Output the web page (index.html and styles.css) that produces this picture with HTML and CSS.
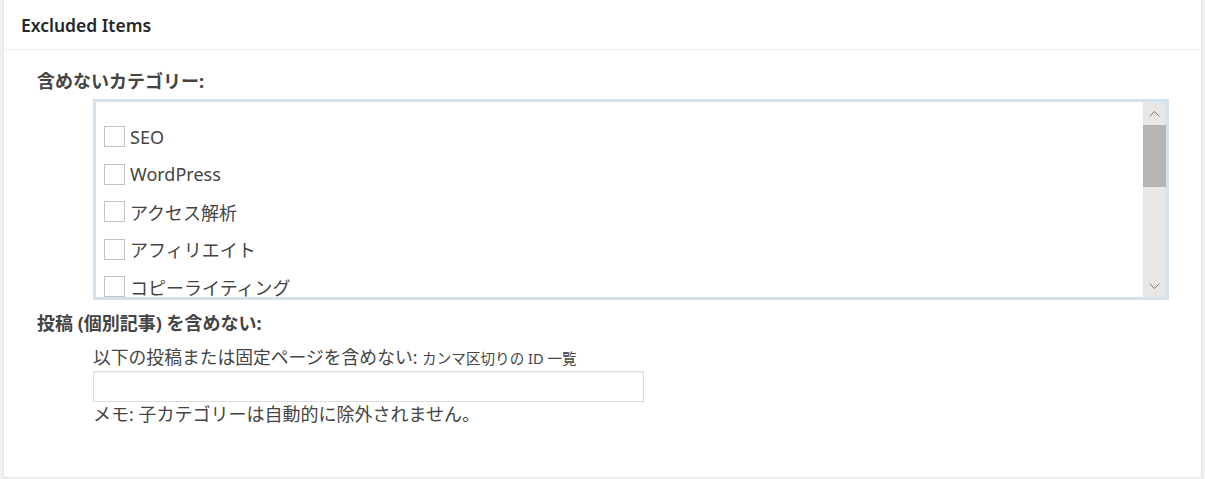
FILE: index.html
```html
<!DOCTYPE html>
<html lang="ja">
<head>
  <meta charset="UTF-8">
  <title>Excluded Items</title>
  <link rel="stylesheet" href="styles.css">
</head>
<body>
  <div class="wrap">
    <div class="postbox">
      <h2 class="hndle">Excluded Items</h2>
      <div class="inside">
        <div class="field-label">含めないカテゴリー:</div>
        <div class="cat-box">
          <div class="cat-list">
            <ul>
              <li><span class="check"></span>SEO</li>
              <li><span class="check"></span>WordPress</li>
              <li><span class="check"></span>アクセス解析</li>
              <li><span class="check"></span>アフィリエイト</li>
              <li><span class="check"></span>コピーライティング</li>
            </ul>
          </div>
          <div class="scrollbar">
            <span class="arrow">
              <svg width="11" height="6" viewBox="0 0 11 6"><path d="M0.5 5.5 L5.5 0.5 L10.5 5.5" fill="none" stroke="#777" stroke-width="1"/></svg>
            </span>
            <span class="thumb"></span>
            <span class="track"></span>
            <span class="arrow">
              <svg width="11" height="6" viewBox="0 0 11 6"><path d="M0.5 0.5 L5.5 5.5 L10.5 0.5" fill="none" stroke="#777" stroke-width="1"/></svg>
            </span>
          </div>
        </div>

        <div class="field-label second">投稿 (個別記事) を含めない:</div>
        <div class="field">
          <p class="desc">以下の投稿または固定ページを含めない: <small>カンマ区切りの ID 一覧</small></p>
          <input type="text" class="ids">
          <p class="note">メモ: 子カテゴリーは自動的に除外されません。</p>
        </div>
      </div>
    </div>
  </div>
</body>
</html>
```

FILE: styles.css
```css
body {
  margin: 0;
  background-color: #f1f1f1;
  font-family: 'Noto Sans', 'Noto Sans CJK JP', sans-serif;
  color: #444;
}
.wrap {
  padding: 0 3px 3px 3px;
}
.postbox {
  background-color: #fff;
  border: 1px solid #e5e5e5;
  border-top: none;
}
.hndle {
  margin: 0;
  height: 49px;
  line-height: 50px;
  padding-left: 17px;
  font-size: 17.5px;
  font-weight: 600;
  color: #23282d;
  border-bottom: 1px solid #eee;
}
.inside {
  padding: 18px 32px 51px 33px;
}
.field-label {
  font-size: 18px;
  font-weight: bold;
  line-height: 26px;
  color: #444;
}
.field-label.second {
  margin-top: 10px;
}
.cat-box {
  display: flex;
  height: 195px;
  margin: 5px 0 0 56px;
  border: 3px solid #d2e2ef;
}
.cat-list {
  flex: 1;
  overflow: hidden;
}
.cat-list ul {
  list-style: none;
  margin: 0;
  padding: 16px 0 0 8px;
}
.cat-list li {
  display: flex;
  align-items: center;
  height: 37.5px;
  font-size: 18px;
  color: #444;
}
.check {
  width: 19px;
  height: 19px;
  border: 1px solid #c3c3c3;
  margin-right: 5px;
  background: #fff;
}
.scrollbar {
  width: 23px;
  display: flex;
  flex-direction: column;
  background-color: #e7e7e7;
}
.arrow {
  height: 23px;
  display: flex;
  align-items: center;
  justify-content: center;
}
.thumb {
  height: 62px;
  background-color: #b5b5b5;
}
.track {
  flex: 1;
}
.field {
  margin-left: 56px;
}
.desc {
  margin: 9px 0 0 0;
  font-size: 17.8px;
  line-height: 24px;
}
.desc small {
  font-size: 14.6px;
}
.ids {
  display: block;
  box-sizing: border-box;
  width: 551px;
  height: 31px;
  margin: 1px 0 0 0;
  border: 1px solid #ddd;
  box-shadow: inset 0 1px 2px rgba(0, 0, 0, 0.07);
}
.note {
  margin: 0;
  font-size: 18px;
  line-height: 24px;
}
```
